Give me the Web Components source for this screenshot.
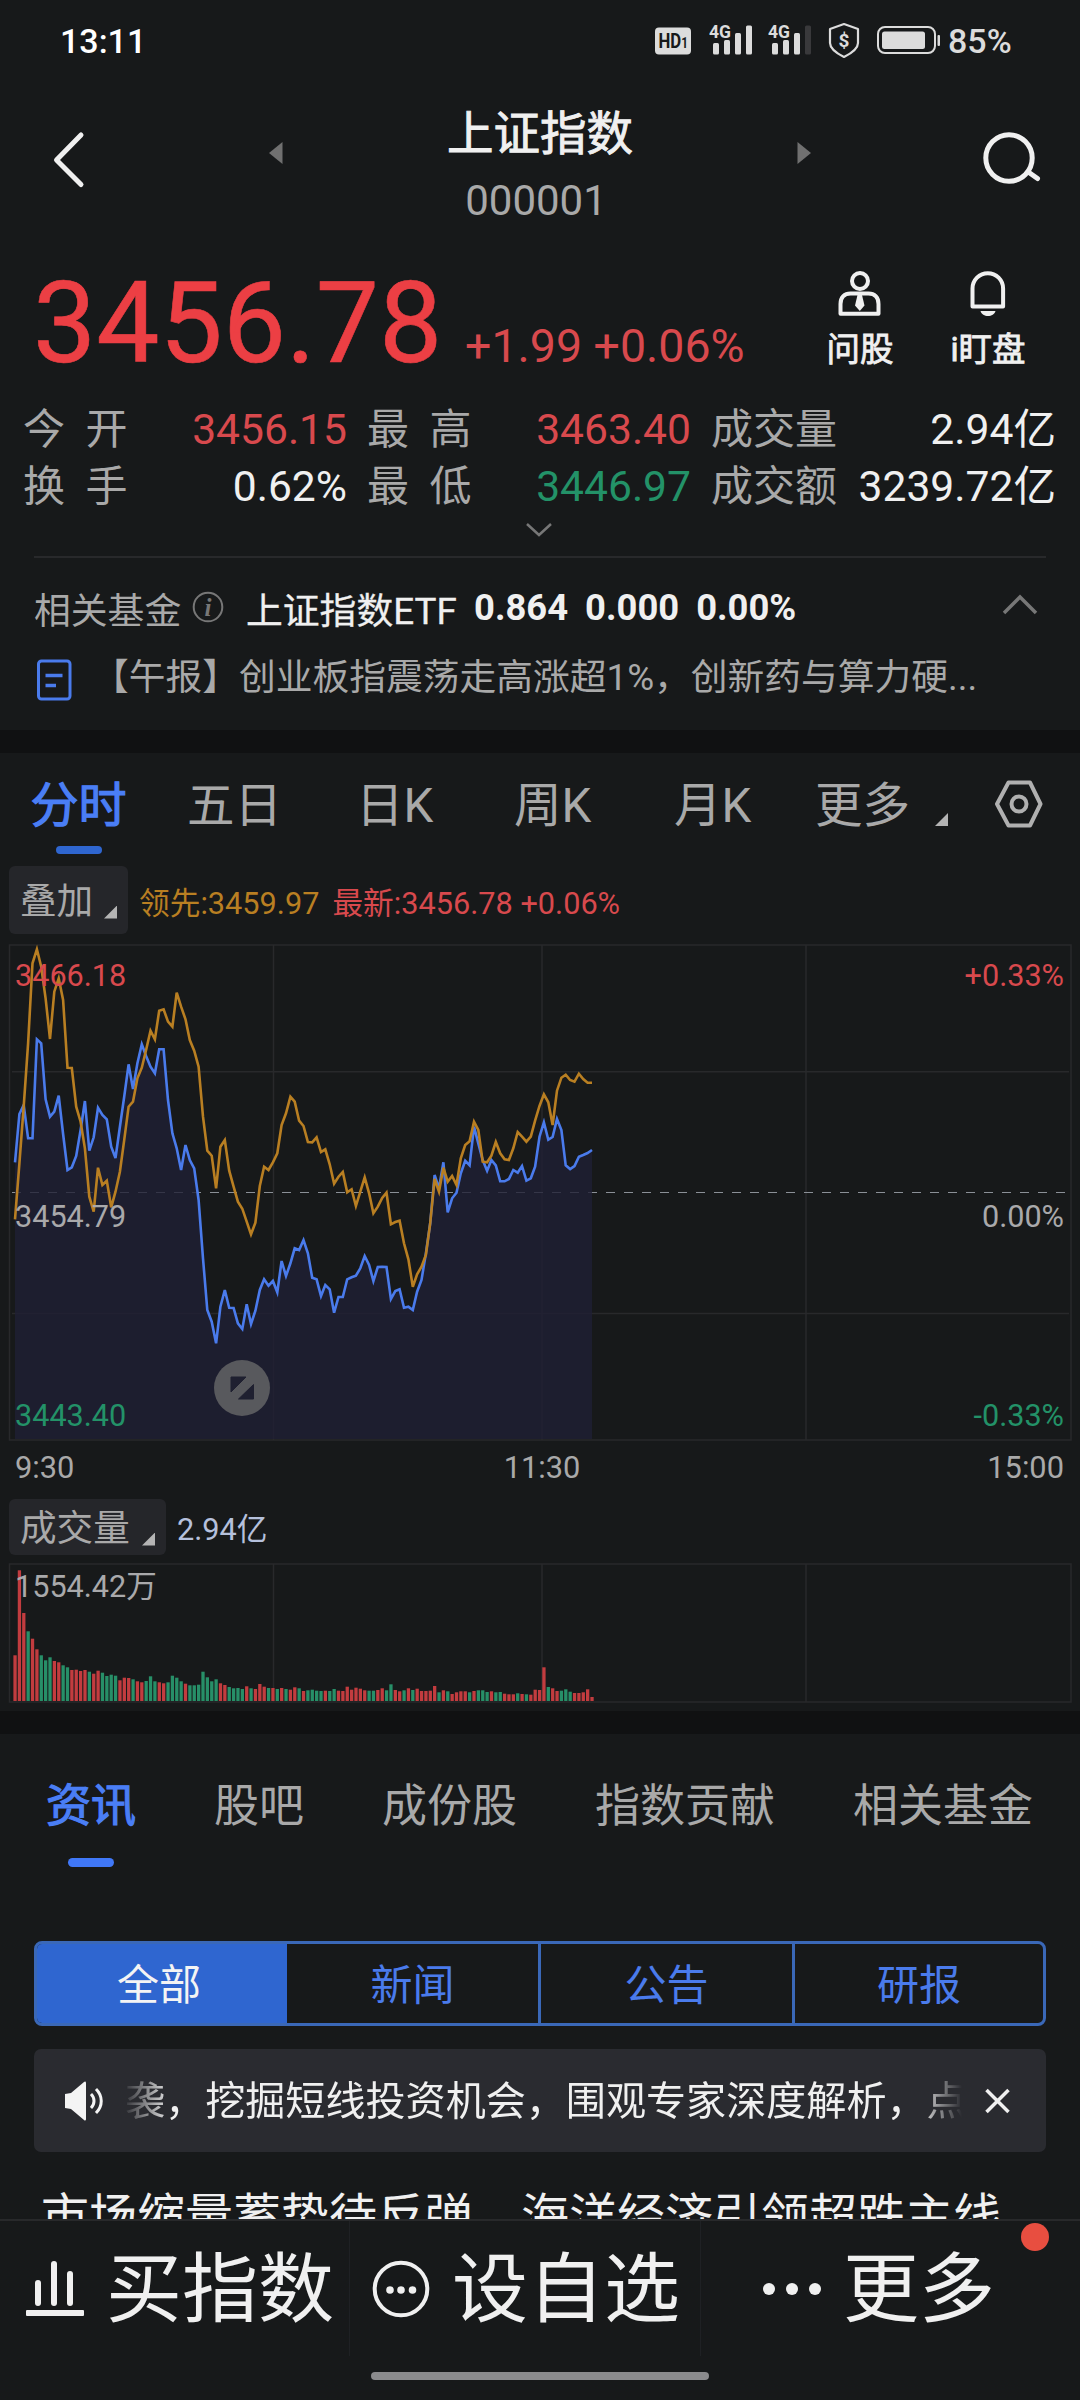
<!DOCTYPE html>
<html lang="zh-CN">
<head>
<meta charset="utf-8">
<title>上证指数</title>
<style>
  html, body { margin: 0; background: #17191a; }
  body {
    width: 1080px;
    height: 2400px;
    overflow: hidden;
    font-family: Roboto, "Noto Sans CJK SC", sans-serif;
    color: #f0f0f0;
    --bg: #17191a;
    --band: #101112;
    --text: #f0f0f0;
    --muted: #a9a9a9;
    --line: #28292b;
    --chip: #25262a;
    --red: #d8494d;
    --green: #239268;
    --orange: #b97f22;
    --blue: #4a7bec;
    --blue-fill: #2f66d0;
  }
</style>
</head>
<body>
<stock-page>
  <status-bar slot="top" time="13:11" battery="85%"></status-bar>
  <index-header slot="top">
    <span slot="name">上证指数</span>
    <span slot="code">000001</span>
  </index-header>

  <quote-panel>
    <span slot="price">3456.78</span>
    <span slot="change">+1.99 +0.06%</span>
    <quote-item slot="stats" label="今 开" value="3456.15" tone="up"></quote-item>
    <quote-item slot="stats" label="最 高" value="3463.40" tone="up"></quote-item>
    <quote-item slot="stats" label="成交量" value="2.94亿"></quote-item>
    <quote-item slot="stats" label="换 手" value="0.62%"></quote-item>
    <quote-item slot="stats" label="最 低" value="3446.97" tone="down"></quote-item>
    <quote-item slot="stats" label="成交额" value="3239.72亿"></quote-item>
    <span slot="news">【午报】创业板指震荡走高涨超1%，创新药与算力硬...</span>
  </quote-panel>

  <intraday-panel></intraday-panel>

  <info-panel>
    <span slot="notice">袭，挖掘短线投资机会，围观专家深度解析，点</span>
    <span slot="headline">市场缩量蓄势待反弹　海洋经济引领超跌主线</span>
  </info-panel>

  <bottom-bar slot="bottom"></bottom-bar>
</stock-page>

<script>
function define(name, html, setup) {
  const template = document.createElement('template');
  template.innerHTML = html;

  window.customElements.define(name, class extends HTMLElement {
    constructor() {
      super();
      this.attachShadow({mode: 'open'});
      this.shadowRoot.appendChild(template.content.cloneNode(true));
    }

    connectedCallback() {
      if (setup) setup(this, this.shadowRoot);
    }
  });
}

define('stock-page', `
  <style>
    :host { display: flex; flex-direction: column; width: 1080px; height: 2400px; background: var(--bg); }
    .main { flex: 1; min-height: 0; overflow: hidden; }
  </style>
  <slot name="top"></slot>
  <div class="main"><slot></slot></div>
  <slot name="bottom"></slot>
`);

define('status-bar', `
  <style>
    :host { display: flex; align-items: center; height: 80px; padding: 2px 0 0 60px; box-sizing: border-box; font-weight: 500; line-height: 40px; }
    .time { width: 595px; font-size: 34px; color: #fff; }
    .battery { font-size: 34px; color: #dcdcdc; margin-left: 7px; }
    svg { display: block; fill: #dcdcdc; font-family: Roboto, sans-serif; font-weight: 700; }
  </style>
  <span class="time"></span>
  <svg width="36" height="40"><rect y="6.500" width="36" height="27" rx="4"/><text x="3.500" y="27" font-size="20" fill="#17191a" textLength="29.500" lengthAdjust="spacingAndGlyphs">HD<tspan font-size="14">1</tspan></text></svg>
  <svg width="44" height="40" style="margin-left:18px"><text x="0" y="17" font-size="19" textLength="22" lengthAdjust="spacingAndGlyphs">4G</text><rect x="4" y="22" width="6" height="11.500" rx="1.500"/><rect x="15" y="19" width="6" height="14.500" rx="1.500"/><rect x="26" y="12" width="6" height="21.500" rx="1.500"/><rect x="37" y="4.500" width="6" height="29" rx="1.500"/></svg>
  <svg width="44" height="40" style="margin-left:15px"><text x="0" y="17" font-size="19" textLength="22" lengthAdjust="spacingAndGlyphs">4G</text><rect x="4" y="22" width="6" height="11.500" rx="1.500"/><rect x="15" y="19" width="6" height="14.500" rx="1.500"/><rect x="26" y="12" width="6" height="21.500" rx="1.500"/><rect x="37" y="4.500" width="6" height="29" rx="1.500" fill="#39393b"/></svg>
  <svg width="32" height="40" style="margin-left:16px"><path d="M16 3l14 5v14c0 6-6 10-14 14C8 32 2 28 2 22V8z" fill="none" stroke="#dcdcdc" stroke-width="2.200" stroke-linejoin="round"/><text x="16" y="26" font-size="19" text-anchor="middle">$</text></svg>
  <svg width="64" height="40" style="margin-left:17px"><rect x="1" y="6" width="57" height="26" rx="7" fill="none" stroke="#dcdcdc" stroke-width="2"/><rect x="5" y="10.500" width="43" height="17.500" rx="2.500"/><rect x="60.500" y="14" width="2.500" height="11" rx="1"/></svg>
  <span class="battery"></span>
`, (host, root) => {
  root.querySelector('.time').textContent = host.getAttribute('time');
  root.querySelector('.battery').textContent = host.getAttribute('battery');
});

define('index-header', `
  <style>
    :host { display: grid; grid-template-columns: 40px 176px 20px 508px 20px 168px 60px; align-items: center; height: 160px; padding-left: 50px; box-sizing: border-box; }
    svg { display: block; }
    .back { grid-column: 1; }
    .prev { grid-column: 3; margin-top: -14px; }
    .next { grid-column: 5; margin-top: -14px; }
    .search { grid-column: 7; }
    .title { grid-column: 4; align-self: start; padding-top: 24px; text-align: center; }
    .name { font-size: 46.500px; line-height: 60px; -webkit-text-stroke: .9px; }
    .code { font-size: 42px; line-height: 50px; margin-top: 12px; color: var(--muted); padding-right: 8px; }
  </style>
  <svg class="back" width="40" height="60" fill="none" stroke="#f0f0f0" stroke-width="5" stroke-linecap="round" stroke-linejoin="round"><path d="M31 5L6.500 30 31 54.500"/></svg>
  <svg class="prev" width="20" height="24"><path d="M16.500 1v22L3 12z" fill="#707070"/></svg>
  <div class="title">
    <div class="name"><slot name="name"></slot></div>
    <div class="code"><slot name="code"></slot></div>
  </div>
  <svg class="next" width="20" height="24"><path d="M3.500 1v22L17 12z" fill="#707070"/></svg>
  <svg class="search" width="60" height="60" fill="none" stroke="#f0f0f0" stroke-width="5" stroke-linecap="round"><circle cx="27" cy="28" r="23.200"/><path d="M47 42.500l8.500 6"/></svg>
`);

define('quote-item', `
  <style>
    :host { display: flex; justify-content: space-between; align-items: center; height: 57px; line-height: 57px; }
    .label { font-size: 42px; color: var(--muted); word-spacing: 10px; }
    .value { font-size: 42.600px; }
    .up { color: var(--red); }
    .down { color: var(--green); }
  </style>
  <span class="label"></span>
  <span class="value"></span>
`, (host, root) => {
  root.querySelector('.label').textContent = host.getAttribute('label');
  const value = root.querySelector('.value');
  value.textContent = host.getAttribute('value');
  if (host.hasAttribute('tone')) value.classList.add(host.getAttribute('tone'));
});

define('quote-panel', `
  <style>
    :host { display: block; height: 490px; }
    svg { display: block; }
    .head { display: flex; height: 161px; padding: 28px 28px 0 33px; box-sizing: border-box; }
    .price { font-size: 112.600px; line-height: 112px; color: #ec3f44; width: 432px; -webkit-text-stroke: .6px; }
    .change { font-size: 46.500px; color: var(--red); }
    .nums { display: flex; align-items: baseline; width: 763px; height: 112px; white-space: nowrap; }
    .quick { display: flex; flex-direction: column; align-items: center; width: 128px; font-size: 33.500px; line-height: 40px; gap: 14px; -webkit-text-stroke: .8px; }
    .stats { display: grid; grid-template-columns: 324px 324px 345px; column-gap: 20px; padding: 0 23px; }
    .more { height: 41px; padding: 6px 0 0 525px; box-sizing: border-box; }
    .fund { display: flex; align-items: center; height: 101px; margin: 0 34px 2px; border-top: 2px solid var(--line); box-sizing: border-box; font-size: 36.800px; }
    .fund .tag { color: var(--muted); width: 156px; }
    .fund .etf { margin-left: 20px; width: 228px; -webkit-text-stroke: .3px; }
    .fund b { font-size: 36.400px; font-weight: 700; margin-right: 17px; }
    .fund .up { margin-left: auto; margin-right: 8px; }
    .news { display: flex; align-items: center; height: 42px; padding-left: 36px; font-size: 36.750px; line-height: 42px; color: var(--muted); white-space: nowrap; }
    .news svg { margin-right: 20px; }
    .news div { padding-bottom: 5px; }
  </style>
  <div class="head">
    <div class="nums">
      <span class="price"><slot name="price"></slot></span>
      <span class="change"><slot name="change"></slot></span>
    </div>
    <div class="quick">
      <svg width="48" height="48" fill="none" stroke="#f0f0f0" stroke-width="4"><circle cx="24" cy="13" r="8"/><path d="M4.500 45.700V36c0-7 4-10.500 10-10.500h18c6 0 10 3.500 10 10.500v9.700z" stroke-linejoin="round"/><path d="M21.500 27h4.500l2.500 10.500-4.700 5.500-4.800-5.500z" fill="#f0f0f0" stroke="none"/></svg>
      <span>问股</span>
    </div>
    <div class="quick">
      <svg width="48" height="48" fill="none" stroke="#f0f0f0" stroke-width="4"><path d="M8.500 38.500V20.500a15.300 15.300 0 0 1 30.600 0v18z" stroke-linejoin="round"/><path d="M16.500 43h15c-1 3.500-4 5-7.500 5s-6.500-1.500-7.500-5z" fill="#f0f0f0" stroke="none"/></svg>
      <span>i盯盘</span>
    </div>
  </div>
  <div class="stats"><slot name="stats"></slot></div>
  <div class="more"><svg width="28" height="18" fill="none" stroke="#777" stroke-width="2.500"><path d="M2 3l12 11L26 3"/></svg></div>
  <div class="fund">
    <span class="tag">相关基金</span>
    <svg width="36" height="36"><circle cx="18" cy="17" r="14.300" fill="none" stroke="#777" stroke-width="2"/><text x="18" y="25.500" font-family="Liberation Serif, serif" font-style="italic" font-weight="bold" font-size="25" text-anchor="middle" fill="#777">i</text></svg>
    <span class="etf">上证指数ETF</span>
    <b>0.864</b><b>0.000</b><b>0.00%</b>
    <svg class="up" width="36" height="24" fill="none" stroke="#777" stroke-width="3.500" style="margin-bottom:6px"><path d="M2 20L18 4l16 16"/></svg>
  </div>
  <div class="news">
    <svg width="36" height="44" fill="none" stroke="#4a7bec" stroke-width="3"><rect x="2.500" y="3" width="31.500" height="38" rx="3"/><path d="M9.500 17.500h17M9.500 27.500h10.500" stroke-width="3.500"/></svg>
    <div><slot name="news"></slot></div>
  </div>
`);

// One sample a minute from 9:30, in thirds of a pixel from the top of the plot.
const INDEX_LINE = [
  697, 552, 525, 625, 625, 328, 340, 508, 560, 545, 497, 612, 720, 712, 678, 600, 513, 662, 622, 533,
  555, 568, 650, 684, 590, 498, 403, 477, 400, 343, 378, 410, 430, 358, 358, 510, 610, 655, 720, 645,
  690, 715, 810, 985, 1140, 1175, 1240, 1130, 1080, 1133, 1134, 1180, 1197, 1123, 1182, 1142, 1080, 1048, 1067, 1053,
  1087, 993, 1038, 1000, 955, 960, 930, 970, 1043, 1048, 1098, 1065, 1078, 1148, 1101, 1101, 1048, 1042, 1037, 1015,
  978, 1005, 1053, 1011, 1010, 1011, 1107, 1083, 1078, 1133, 1130, 1140, 1085, 1050, 970, 880, 735, 775, 697, 847,
  805, 788, 730, 692, 706, 590, 640, 690, 722, 690, 706, 754, 754, 747, 720, 728, 708, 752, 745, 710,
  620, 577, 629, 621, 567, 600, 706, 717, 708, 680, 675, 669, 660
];
const LEAD_LINE = [
  868, 700, 530, 340, 100, 58, 110, 205, 327, 185, 145, 210, 413, 414, 530, 575, 655, 800, 845, 713,
  765, 752, 832, 785, 725, 628, 530, 515, 445, 413, 360, 302, 328, 242, 238, 275, 290, 188, 230, 268,
  330, 362, 410, 560, 662, 677, 775, 650, 630, 722, 770, 815, 836, 875, 913, 878, 768, 710, 720, 697,
  670, 585, 550, 500, 515, 572, 588, 636, 637, 622, 666, 658, 703, 761, 740, 726, 787, 778, 828, 785,
  742, 790, 850, 830, 804, 788, 883, 876, 872, 940, 988, 1070, 1033, 1010, 975, 880, 747, 785, 713, 755,
  738, 765, 685, 645, 634, 575, 600, 695, 697, 677, 636, 670, 688, 690, 655, 606, 620, 635, 620, 572,
  528, 493, 517, 585, 482, 443, 434, 450, 455, 431, 447, 458, 458
];
const STEP = 4.371;

define('trend-chart', `
  <style>
    :host { display: block; height: 498px; }
    svg { display: block; font-family: Roboto, sans-serif; font-size: 30.600px; fill: none; }
    .grid { stroke: #28292b; stroke-width: 1.500; }
    .index { stroke: #4a7bec; stroke-width: 2.600; }
    .lead { stroke: #b97f22; stroke-width: 2.600; }
    .area { fill: #1f1f34; fill-opacity: .8; }
    .up { fill: #d8494d; }
    .flat { fill: #a9a9ab; }
    .down { fill: #239268; }
  </style>
  <svg width="1080" height="498">
    <rect class="grid" x="9.500" y="1" width="1061.500" height="495"/>
    <path class="grid" d="M273.500 1v495M542 1v495M806 1v495M12 127.700h1057M12 369.500h1057"/>
    <path d="M12 248.500h1056" stroke="#8b9097" stroke-width="1.100" stroke-dasharray="9 9"/>
    <path class="area"/>
    <path class="index"/>
    <path class="lead"/>
    <g class="up"><text x="15" y="41.500">3466.18</text><text x="1064" y="41.500" text-anchor="end">+0.33%</text></g>
    <g class="flat"><text x="15" y="282.500">3454.79</text><text x="1064" y="282.500" text-anchor="end">0.00%</text></g>
    <g class="down"><text x="15" y="481.500">3443.40</text><text x="1064" y="481.500" text-anchor="end">-0.33%</text></g>
    <circle cx="242" cy="444" r="28" fill="#58595d"/>
    <path d="M231 433h15l-15 15zM253.500 440.500V455h-15z" fill="#1f2030" stroke="#1f2030" stroke-linejoin="round"/>
  </svg>
`, (host, root) => {
  const toPath = (samples) => 'M' + samples
    .map((v, i) => `${(15 + i * STEP).toFixed(1)} ${(v / 3 - 14).toFixed(1)}`)
    .join('L');
  const endX = 15 + (INDEX_LINE.length - 1) * STEP;
  root.querySelector('.index').setAttribute('d', toPath(INDEX_LINE));
  root.querySelector('.lead').setAttribute('d', toPath(LEAD_LINE));
  root.querySelector('.area').setAttribute('d', `${toPath(INDEX_LINE)}L${endX.toFixed(1)} 495H15z`);
});

// height in thirds of a pixel, then r / g for a rising or falling minute
const VOLUME = `137r 392r 264r 209g 187r 155r 137g 122g 131g 120r 116r 107g 101g 93r 94r 90r 93r 88g 82r 91r
  85g 75g 79g 76g 62r 70r 69r 65g 59r 56r 60g 74g 59g 56r 53r 56g 76g 70g 59g 52r
  47g 47g 49g 88g 71g 59g 65g 53r 48r 42g 38g 39g 36g 44r 38g 36r 51r 43r 39g 39r
  36g 39r 36g 34r 41r 38g 30r 32g 34g 31g 30g 31r 30g 36g 31r 30r 43r 34r 40r 37r
  32r 31g 31g 33r 38r 32g 50g 33r 29r 32g 38r 33g 37r 30r 30r 31r 45r 26g 32r 29g
  21r 26r 29r 29r 26g 30r 32g 32g 27g 29r 26g 27g 22r 20r 20r 23g 21r 20g 19r 34r
  33r 101r 42g 38r 30r 31g 35g 28g 24r 24r 26r 35r 12r`;

define('volume-chart', `
  <style>
    :host { display: block; height: 140px; }
    svg { display: block; }
    text { font: 30.600px Roboto, "Noto Sans CJK SC", sans-serif; fill: #a9a9ab; }
    .grid { fill: none; stroke: #28292b; stroke-width: 1.500; }
  </style>
  <svg width="1080" height="140">
    <rect class="grid" x="9.500" y="1" width="1061.500" height="138"/>
    <path class="grid" d="M273.500 1v138M542 1v138M806 1v138"/>
    <g class="bars"></g>
    <text x="15" y="34">1554.42万</text>
  </svg>
`, (host, root) => {
  const bars = root.querySelector('.bars');
  bars.innerHTML = VOLUME.split(/\s+/).map((v, i) => {
    const height = parseInt(v, 10) / 3;
    const fill = v.endsWith('r') ? '#c23c3f' : '#278f68';
    return `<rect x="${(13.4 + i * STEP).toFixed(2)}" y="${(138 - height).toFixed(1)}" width="3.300" height="${height.toFixed(1)}" fill="${fill}"/>`;
  }).join('');
});

define('drop-chip', `
  <style>
    :host { display: inline-flex; align-items: center; background: var(--chip); border-radius: 6px; color: var(--muted); padding: 0 11px 0 11px; margin-left: 9px; box-sizing: border-box; font-size: 36.600px; }
    span { padding-bottom: 3px; }
    i { width: 13px; height: 13px; margin: 24px 0 0 auto; background: #b4b4b4; clip-path: polygon(100% 0, 100% 100%, 0 100%); }
  </style>
  <span><slot></slot></span><i></i>
`);

define('intraday-panel', `
  <style>
    :host { display: block; height: 981px; border-top: 23px solid var(--band); box-sizing: border-box; }
    .tabs { display: grid; grid-template-columns: 157px 169px 158px 160px 141px 120px 59px 50px; height: 113px; padding: 23px 0 0 30px; box-sizing: border-box; font-size: 47.500px; line-height: 60px; color: var(--muted); }
    .active { display: flex; flex-direction: column; align-items: center; width: 97px; color: #4a7ef5; font-size: 48px; gap: 10px; -webkit-text-stroke: 1.200px; }
    .active i { width: 46px; height: 8px; border-radius: 4px; background: var(--blue-fill); }
    .tri { width: 13px; height: 13px; margin-top: 37px; background: #b4b4b4; clip-path: polygon(100% 0, 100% 100%, 0 100%); }
    .legend { display: flex; align-items: center; height: 68px; font-size: 30.700px; margin-bottom: 10px; }
    .legend drop-chip { width: 119px; height: 68px; margin-right: 11px; }
    .lead { color: var(--orange); margin: 1px 13px 0 0; }
    .last { color: var(--red); margin-top: 1px; }
    .axis { display: grid; grid-template-columns: 1fr 1fr 1fr; height: 50px; line-height: 50px; padding: 1px 16px 0 15px; margin-bottom: 6px; font-size: 30.800px; color: var(--muted); }
    .axis :nth-child(2) { text-align: center; padding-left: 5px; }
    .axis :nth-child(3) { text-align: right; }
    .vol { display: flex; align-items: center; height: 56px; margin-bottom: 8px; font-size: 30.700px; color: #b5c0dc; }
    .vol > span { padding-bottom: 2px; }
    .vol drop-chip { width: 157px; height: 56px; margin-right: 11px; }
    svg { margin-top: 2px; }
  </style>
  <div class="tabs">
    <span class="active">分时<i></i></span>
    <span>五日</span><span>日K</span><span>周K</span><span>月K</span><span>更多</span>
    <i class="tri"></i>
    <svg width="52" height="52" fill="none" stroke="#b0b0b0" stroke-width="4" stroke-linejoin="round"><path d="M14.500 4.500h21.500L46.500 26 36 47.500H14.500L3 26z"/><circle cx="25" cy="26" r="7.500"/></svg>
  </div>
  <div class="legend">
    <drop-chip>叠加</drop-chip>
    <span class="lead">领先:3459.97</span>
    <span class="last">最新:3456.78 +0.06%</span>
  </div>
  <trend-chart></trend-chart>
  <div class="axis"><span>9:30</span><span>11:30</span><span>15:00</span></div>
  <div class="vol"><drop-chip>成交量</drop-chip><span>2.94亿</span></div>
  <volume-chart></volume-chart>
`);

define('info-panel', `
  <style>
    :host { display: block; border-top: 23px solid var(--band); }
    .tabs { display: flex; gap: 78px; height: 207px; padding: 43px 0 0 46px; box-sizing: border-box; font-size: 45px; line-height: 60px; color: var(--muted); white-space: nowrap; }
    .active { display: flex; flex-direction: column; align-items: center; color: #4a7ef5; -webkit-text-stroke: 1.200px; }
    .active i { width: 46px; height: 9px; margin: 21px 0 0; border-radius: 5px; background: #4078f8; }
    .segments { display: grid; grid-template-columns: 250px 251px 254px 1fr; height: 85px; margin: 0 34px; border: 3px solid #3a68b8; border-radius: 8px; box-sizing: border-box; overflow: hidden; font-size: 42px; line-height: 83px; text-align: center; color: var(--blue); }
    .segments span + span + span { border-left: 3px solid #3a68b8; }
    .segments .on { background: var(--blue-fill); color: #f4f4f4; padding-right: 6px; }
    .notice { display: flex; align-items: center; height: 103px; margin: 23px 34px 0; padding: 0 35px 0 30px; box-sizing: border-box; border-radius: 7px; background: #2a2b30; font-size: 40.100px; line-height: 60px; }
    .roll { width: 840px; padding: 3px 0 0 3px; margin: 0 auto 0 18px; box-sizing: border-box; overflow: hidden; white-space: nowrap; -webkit-mask-image: linear-gradient(90deg, transparent 0, #000 50px, #000 795px, transparent 840px); mask-image: linear-gradient(90deg, transparent 0, #000 50px, #000 795px, transparent 840px); }
    .headline { margin: 35px 0 0 41px; font-size: 48px; line-height: 60px; white-space: nowrap; }
  </style>
  <div class="tabs">
    <span class="active">资讯<i></i></span>
    <span>股吧</span><span>成份股</span><span>指数贡献</span><span>相关基金</span>
  </div>
  <div class="segments"><span class="on">全部</span><span>新闻</span><span>公告</span><span>研报</span></div>
  <div class="notice">
    <svg width="40" height="40"><path d="M1 13l6-1L20 1c1-1 2-.5 2 1v36c0 1.500-1 2-2 1L7 28l-6-1z" fill="#f4f4f4"/><path d="M27 13c4 4 4 10 0 14M32 8c7 7 7 17 0 24" fill="none" stroke="#f4f4f4" stroke-width="3"/></svg>
    <div class="roll"><slot name="notice"></slot></div>
    <svg width="26" height="26" fill="none" stroke="#f0f0f0" stroke-width="3.500"><path d="M1.500 2l22 22M23.500 2l-22 22"/></svg>
  </div>
  <div class="headline"><slot name="headline"></slot></div>
`);

define('bottom-bar', `
  <style>
    :host { display: block; flex: none; height: 181px; border-top: 2px solid var(--line); box-sizing: border-box; background: var(--bg); }
    .cells { display: grid; grid-template-columns: 350px 351px 379px; height: 135px; font-size: 76px; line-height: 130px; white-space: nowrap; }
    .cell { position: relative; display: flex; align-items: center; border-right: 1px solid #1f2124; }
    .cell span { padding-top: 2px; }
    .cell:last-child { border: 0; }
    .dot { position: absolute; left: 320px; top: 2px; width: 28px; height: 28px; border-radius: 50%; background: #e84e40; }
    .home { width: 338px; height: 8px; margin: 16px auto 0; border-radius: 4px; background: #8b8b8d; }
  </style>
  <div class="cells">
    <div class="cell">
      <svg width="60" height="60" style="margin:0 21px 0 25px" fill="#f0f0f0"><rect x="1" y="51" width="58" height="6" rx="1"/><rect x="10" y="21" width="6" height="26" rx="3"/><rect x="26" y="2" width="6" height="45" rx="3"/><rect x="42" y="12" width="6" height="35" rx="3"/></svg>
      <span>买指数</span>
    </div>
    <div class="cell">
      <svg width="60" height="60" style="margin:0 21px 0 21px"><circle cx="30" cy="30" r="26.300" fill="none" stroke="#f0f0f0" stroke-width="4"/><g fill="#f0f0f0"><circle cx="19" cy="31" r="3.800"/><circle cx="30" cy="31" r="3.800"/><circle cx="41.500" cy="31" r="3.800"/></g></svg>
      <span>设自选</span>
    </div>
    <div class="cell">
      <svg width="60" height="60" style="margin:0 21px 0 61px" fill="#f0f0f0"><circle cx="7" cy="30" r="6"/><circle cx="30" cy="30" r="6"/><circle cx="53" cy="30" r="6"/></svg>
      <span>更多</span>
      <i class="dot"></i>
    </div>
  </div>
  <div class="home"></div>
`);
</script>
</body>
</html>
